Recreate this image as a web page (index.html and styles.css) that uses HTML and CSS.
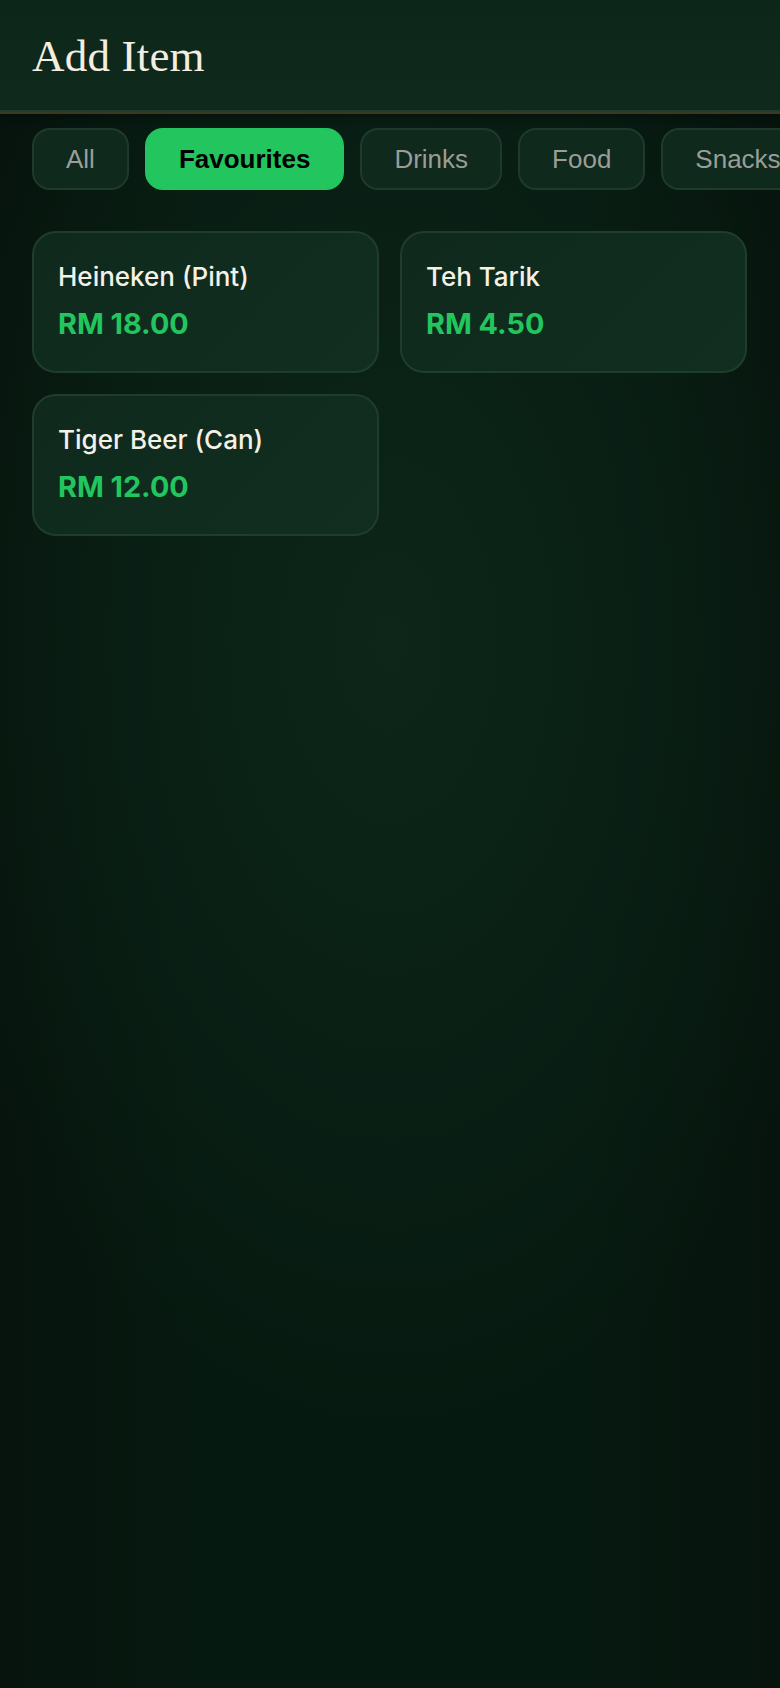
FILE: index.html
```html
<!DOCTYPE html>
<html lang="en">
<head>
<meta charset="utf-8">
<title>Add Item</title>
<link rel="stylesheet" href="styles.css">
</head>
<body>
<header class="topbar">
  <h1 class="title">Add Item</h1>
</header>
<nav class="tabs">
  <button class="tab">All</button>
  <button class="tab tab-active">Favourites</button>
  <button class="tab">Drinks</button>
  <button class="tab">Food</button>
  <button class="tab">Snacks</button>
</nav>
<main class="grid">
  <div class="card">
    <div class="card-name">Heineken (Pint)</div>
    <div class="card-price">RM 18.00</div>
  </div>
  <div class="card">
    <div class="card-name">Teh Tarik</div>
    <div class="card-price">RM 4.50</div>
  </div>
  <div class="card">
    <div class="card-name">Tiger Beer (Can)</div>
    <div class="card-price">RM 12.00</div>
  </div>
</main>
</body>
</html>
```
FILE: styles.css
```css
html, body {
  margin: 0;
  padding: 0;
}
body {
  width: 780px;
  min-height: 1688px;
  overflow: hidden;
  background-color: #061910;
  background-image:
    radial-gradient(ellipse 62% 48% at 50% 38%, #0d2619 0%, #0a2015 45%, rgba(6,25,16,0) 100%),
    linear-gradient(90deg, #06140d 0%, rgba(6,20,13,0) 25%, rgba(6,20,13,0) 75%, #06140d 100%);
  font-family: "Inter", "Liberation Sans", sans-serif;
}
.topbar {
  height: 112px;
  box-sizing: border-box;
  padding: 31px 32px 0;
  background: linear-gradient(180deg, #0d261a 0%, #0f2a1d 100%);
  border-bottom: 2px solid #263c2b;
  box-shadow: 0 2px 0 #383a22, 0 6px 10px rgba(0,0,0,0.35);
  position: relative;
}
.title {
  margin: 0;
  font-family: "Liberation Serif", "DejaVu Serif", serif;
  font-weight: normal;
  font-size: 45px;
  line-height: 50px;
  color: #f3eee0;
  letter-spacing: 0.2px;
}
.tabs {
  display: flex;
  gap: 16px;
  padding: 16px 32px 0;
  overflow: hidden;
  white-space: nowrap;
}
.tab {
  flex: 0 0 auto;
  box-sizing: border-box;
  height: 62px;
  padding: 0 32px;
  border: 2px solid #1d3a2a;
  border-radius: 18px;
  background: #0f291c;
  color: #9b9d97;
  font-family: "Liberation Sans", Arial, sans-serif;
  font-size: 26px;
  font-weight: normal;
  line-height: 1;
}
.tab-active {
  background: #22c55e;
  border-color: #22c55e;
  color: #000;
  font-weight: bold;
}
.grid {
  display: grid;
  grid-template-columns: 1fr 1fr;
  gap: 21px;
  padding: 41px 33px 0 32px;
}
.card {
  height: 142px;
  box-sizing: border-box;
  padding: 28px 24px 0;
  border: 2px solid #1f3d2c;
  border-radius: 24px;
  background: linear-gradient(135deg, #0f2a1d 0%, #112e20 100%);
}
.card-name {
  font-size: 26px;
  font-weight: 500;
  line-height: 31px;
  color: #f4f1e6;
}
.card-price {
  margin-top: 15px;
  font-size: 28.8px;
  font-weight: 700;
  line-height: 34px;
  color: #22c55e;
}
```
